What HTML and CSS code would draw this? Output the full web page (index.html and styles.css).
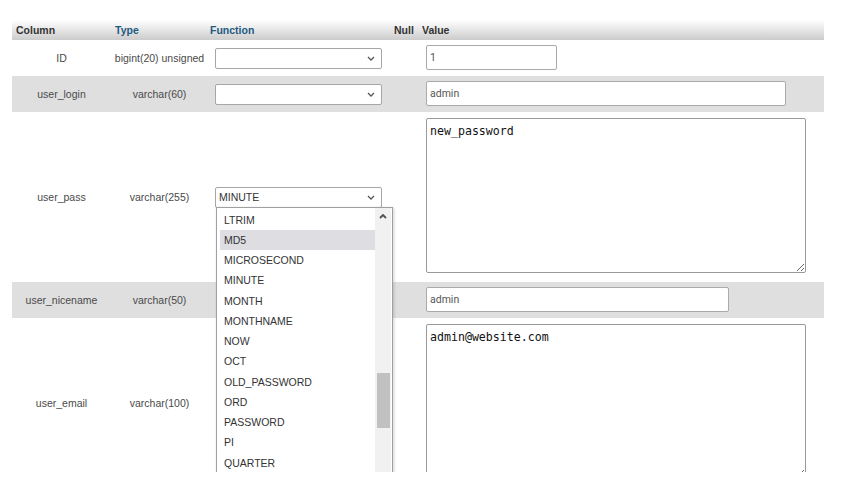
FILE: index.html
```html
<!DOCTYPE html>
<html lang="en">
<head>
<meta charset="utf-8">
<title>Edit row</title>
<link rel="stylesheet" href="styles.css">
</head>
<body>
<div class="page">
  <table class="insert">
    <colgroup>
      <col class="c-col"><col class="c-type"><col class="c-fn"><col class="c-null"><col class="c-val">
    </colgroup>
    <thead>
      <tr>
        <th class="h-col">Column</th>
        <th class="h-type link">Type</th>
        <th class="h-fn link">Function</th>
        <th class="h-null">Null</th>
        <th class="h-val">Value</th>
      </tr>
    </thead>
    <tbody>
      <tr class="row">
        <td class="name">ID</td>
        <td class="type">bigint(20) unsigned</td>
        <td class="fn"><div class="fsel"><span class="fsel-text"></span><svg class="chev" viewBox="0 0 8 5" width="8" height="5"><polyline points="1,1 4,4 7,1"/></svg></div></td>
        <td class="null"></td>
        <td class="val"><input class="in w-id" type="text" value="1"></td>
      </tr>
      <tr class="row alt">
        <td class="name">user_login</td>
        <td class="type">varchar(60)</td>
        <td class="fn"><div class="fsel"><span class="fsel-text"></span><svg class="chev" viewBox="0 0 8 5" width="8" height="5"><polyline points="1,1 4,4 7,1"/></svg></div></td>
        <td class="null"></td>
        <td class="val"><input class="in w-login" type="text" value="admin"></td>
      </tr>
      <tr class="row tall">
        <td class="name">user_pass</td>
        <td class="type">varchar(255)</td>
        <td class="fn">
          <div class="fn-wrap">
            <div class="fsel"><span class="fsel-text">MINUTE</span><svg class="chev" viewBox="0 0 8 5" width="8" height="5"><polyline points="1,1 4,4 7,1"/></svg></div>
            <div class="dd">
              <ul class="dd-items">
                <li>LTRIM</li>
                <li class="hl">MD5</li>
                <li>MICROSECOND</li>
                <li>MINUTE</li>
                <li>MONTH</li>
                <li>MONTHNAME</li>
                <li>NOW</li>
                <li>OCT</li>
                <li>OLD_PASSWORD</li>
                <li>ORD</li>
                <li>PASSWORD</li>
                <li>PI</li>
                <li>QUARTER</li>
              </ul>
              <div class="dd-track">
                <svg class="up" viewBox="0 0 8 5" width="8" height="5"><polyline points="1,4 4,1 7,4"/></svg>
                <div class="thumb"></div>
              </div>
            </div>
          </div>
        </td>
        <td class="null"></td>
        <td class="val tval"><textarea class="ta">new_password</textarea></td>
      </tr>
      <tr class="row alt">
        <td class="name">user_nicename</td>
        <td class="type">varchar(50)</td>
        <td class="fn"></td>
        <td class="null"></td>
        <td class="val"><input class="in w-nice" type="text" value="admin"></td>
      </tr>
      <tr class="row tall">
        <td class="name">user_email</td>
        <td class="type">varchar(100)</td>
        <td class="fn"></td>
        <td class="null"></td>
        <td class="val tval"><textarea class="ta">admin@website.com</textarea></td>
      </tr>
    </tbody>
  </table>
</div>
</body>
</html>
```
FILE: styles.css
```css
html, body {
  margin: 0;
  padding: 0;
  background: #ffffff;
}

.page {
  box-sizing: border-box;
  height: 472px;
  overflow: hidden;
  padding: 20px 0 0 12px;
  font-family: "Liberation Sans", Arial, sans-serif;
  font-size: 10.5px;
  color: #444;
}

.insert {
  width: 812px;
  table-layout: fixed;
  border-collapse: collapse;
}

.c-col { width: 99px; }
.c-type { width: 97px; }
.c-fn { width: 182px; }
.c-null { width: 30px; }
.c-val { width: 404px; }

.insert th {
  height: 20px;
  padding: 0;
  text-align: left;
  font-weight: bold;
  font-size: 10.5px;
  color: #333;
  background: linear-gradient(#ffffff, #cccccc);
  vertical-align: middle;
}

.insert th.link { color: #235a81; }
.h-col { padding-left: 4px !important; }
.h-type { padding-left: 4px !important; }
.h-fn { padding-left: 2px !important; }
.h-null { padding-left: 4px !important; }
.h-val { padding-left: 2px !important; }

.insert td {
  padding: 0;
  vertical-align: middle;
}

.row.alt td { background: #dfdfdf; }

.name, .type {
  text-align: center;
  color: #4a4a4a;
}

.fn { padding-left: 7px !important; }

.fn-wrap {
  position: relative;
  width: 167px;
}

.fsel {
  box-sizing: border-box;
  width: 167px;
  height: 21px;
  display: flex;
  align-items: center;
  justify-content: space-between;
  padding: 0 6px 0 3px;
  background: #fff;
  border: 1px solid #a6a6a6;
  border-radius: 2px;
  color: #333;
}

.chev polyline, .up polyline {
  fill: none;
  stroke: #555;
  stroke-width: 1.3;
}

.val {
  padding: 5px 0 6px 6px !important;
}

.val.tval {
  padding: 6px 0 9px 6px !important;
}

.in {
  box-sizing: border-box;
  display: block;
  height: 25px;
  margin: 0;
  padding: 0 3px;
  border: 1px solid #aaaaaa;
  border-radius: 2px;
  background: #fff;
  font-family: Roboto, "Liberation Sans", sans-serif;
  font-size: 10.5px;
  color: #555;
  outline: none;
}

.w-id { width: 131px; }
.w-login { width: 360px; }
.w-nice { width: 303px; }

.ta {
  box-sizing: border-box;
  display: block;
  width: 380px;
  height: 155px;
  margin: 0;
  padding: 6px 3px 3px 3px;
  border: 1px solid #9a9a9a;
  border-radius: 2px;
  background: #fff;
  font-family: "DejaVu Sans Mono", "Liberation Mono", monospace;
  font-size: 11.6px;
  line-height: 13px;
  color: #111;
  outline: none;
}

/* open dropdown list */
.dd {
  position: absolute;
  top: 20px;
  left: 1px;
  width: 177px;
  height: 275px;
  box-sizing: border-box;
  display: flex;
  background: #fff;
  border: 1px solid #a0a0a0;
  box-shadow: 1px 1px 3px rgba(0, 0, 0, 0.18);
  z-index: 5;
}

.dd-items {
  flex: 1;
  list-style: none;
  margin: 0;
  padding: 2px 0 0 3px;
}

.dd-items li {
  height: 20.25px;
  line-height: 20.25px;
  padding-left: 4px;
  color: #333;
  font-size: 10.5px;
}

.dd-items li.hl { background: #dddde2; }

.dd-track {
  width: 16px;
  margin-right: 1px;
  background: #f1f1f1;
  display: flex;
  flex-direction: column;
  align-items: center;
}

.up {
  margin-top: 6px;
}

.up polyline {
  stroke: #505050;
  stroke-width: 1.8;
}

.thumb {
  width: 13px;
  height: 55px;
  margin-top: 154px;
  background: #c1c1c1;
}
```
